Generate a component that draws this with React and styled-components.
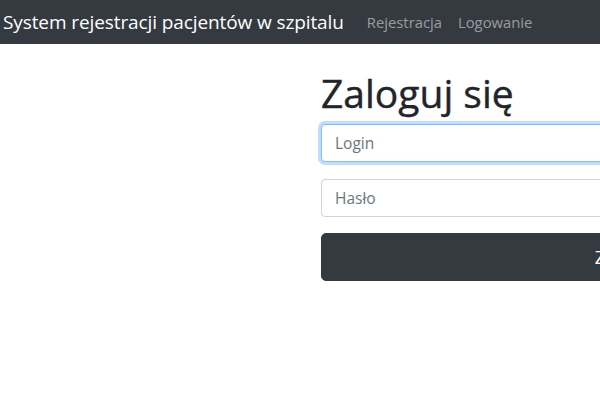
import React from 'react'
import styled, { createGlobalStyle } from 'styled-components'

const GlobalStyle = createGlobalStyle`
  html, body {
    margin: 0;
    padding: 0;
    overflow: hidden;
    background: #fff;
    font-family: "Open Sans", "Noto Sans", sans-serif;
    color: #212529;
  }
  * { box-sizing: border-box; }
`

const Navbar = styled.nav`
  display: flex;
  align-items: center;
  height: 44px;
  padding: 0 0 0 3px;
  background: #343a40;
  white-space: nowrap;
`

const Brand = styled.a`
  font-size: 19px;
  color: #fff;
  letter-spacing: -0.1px;
  margin-right: 23px;
  text-decoration: none;
`

const NavLink = styled.a`
  font-size: 14.8px;
  color: rgba(255, 255, 255, 0.5);
  margin-right: 16px;
  text-decoration: none;
`

const Main = styled.main`
  display: flex;
  padding-left: 321px;
  padding-top: 25px;
`

const Form = styled.form`
  display: flex;
  flex-direction: column;
  flex: 0 0 612px;
`

const Title = styled.h1`
  margin: 0 0 8px;
  font-size: 39px;
  font-weight: 500;
  line-height: 47px;
  letter-spacing: 0;
  -webkit-text-stroke: 0.4px #212529;
`

const Input = styled.input`
  height: 38px;
  padding: 6px 13px;
  margin-bottom: 17px;
  font-family: inherit;
  font-size: 15.5px;
  color: #495057;
  border: 1px solid ${({ $focused }) => ($focused ? '#80bdff' : '#ced4da')};
  border-radius: 4px;
  outline: none;
  box-shadow: ${({ $focused }) => ($focused ? '0 0 0 3px rgba(0, 123, 255, 0.25)' : 'none')};
  &::placeholder { color: #6c757d; }
`

const Button = styled.button`
  height: 48px;
  margin-top: -1px;
  font-family: inherit;
  font-size: 19px;
  color: #fff;
  background: #343a40;
  border: 1px solid #343a40;
  border-radius: 5px;
`

export default function App() {
  return (
    <>
      <GlobalStyle />
      <Navbar>
        <Brand href="#">System rejestracji pacjentów w szpitalu</Brand>
        <NavLink href="#">Rejestracja</NavLink>
        <NavLink href="#">Logowanie</NavLink>
      </Navbar>
      <Main>
        <Form onSubmit={e => e.preventDefault()}>
          <Title>Zaloguj się</Title>
          <Input $focused placeholder="Login" />
          <Input type="password" placeholder="Hasło" />
          <Button type="submit">Zaloguj</Button>
        </Form>
      </Main>
    </>
  )
}
